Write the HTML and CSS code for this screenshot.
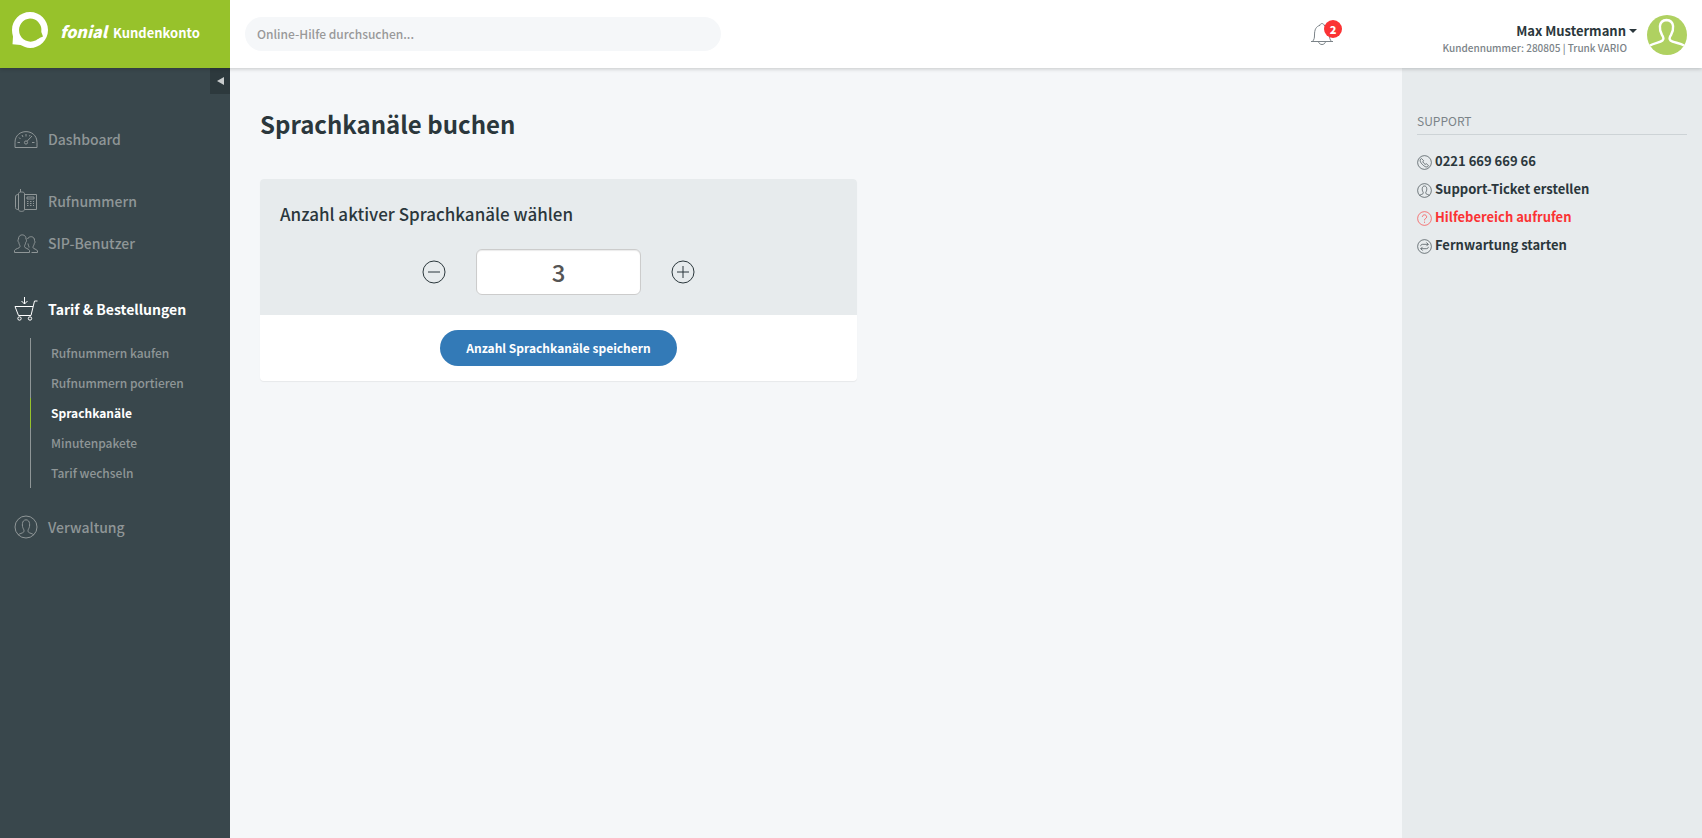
FILE: index.html
```html
<!DOCTYPE html>
<html lang="de">
<head>
<meta charset="utf-8">
<title>fonial Kundenkonto – Sprachkanäle buchen</title>
<link rel="stylesheet" href="styles.css">
</head>
<body>
<svg class="defs" aria-hidden="true">
  <symbol id="person" viewBox="0 0 24 24">
    <circle cx="12" cy="12" r="11"/>
    <path d="M4 20C5.500 18.500 8.500 18.200 9.500 17.200C10.200 16.200 10.200 15.200 9.300 13.700C8 11.500 7.400 5 12 4.800C16.600 5 16 11.500 14.700 13.700C13.800 15.200 13.800 16.200 14.500 17.200C15.500 18.200 18.500 18.500 20 20"/>
  </symbol>
</svg>
<div class="page">
  <header class="topbar">
    <a class="brand" href="#">
      <svg class="brand-mark" viewBox="0 0 36 36" aria-hidden="true">
        <path fill="#fff" fill-rule="evenodd" d="M18 0C28 0 36 8 36 18S28 36 18 36C14.500 36 11.500 34.500 8.500 33L.5 32.300L1 24.500C.4 22.500 0 20.300 0 18C0 8 8 0 18 0ZM18 6.500A11.600 11.600 0 1 0 23.500 28.600C25.500 27.500 26 26.500 31 24.500L29.300 20A11.600 11.600 0 0 0 18 6.500Z"/>
      </svg>
      <span class="brand-text"><em>fonial</em> Kundenkonto</span>
    </a>
    <form class="search" role="search">
      <input type="search" aria-label="Online-Hilfe durchsuchen" placeholder="Online-Hilfe durchsuchen...">
    </form>
    <button class="bell" type="button" aria-label="Benachrichtigungen">
      <svg class="icon" viewBox="0 0 24 24" aria-hidden="true"><path d="M1 19.500H23M2.500 19.500C4.200 17.500 4.500 16 4.500 13C4.500 7.500 6 4.500 10 3.300C10 1 14 1 14 3.300C18 4.500 19.500 7.500 19.500 13C19.500 16 19.800 17.500 21.500 19.500M8.500 19.500C9 23.500 15 23.500 15.500 19.500"/></svg>
      <span class="badge">2</span>
    </button>
    <div class="account">
      <button class="account-name" type="button">Max Mustermann<span class="caret"></span></button>
      <span class="account-info">Kundennummer: 280805 | Trunk VARIO</span>
    </div>
    <svg class="avatar" viewBox="0 0 40 40" aria-hidden="true">
      <circle cx="20" cy="20" r="20" fill="#afd161"/>
      <path fill="none" stroke="#fff" stroke-width="2.400" d="M3 30.500C7 28 13 27.500 15.500 25.500C17 24 16.800 22.500 15 20C12.500 16 10.500 5.500 19.500 5C28.500 5.500 26.500 16 24 20C22.200 22.500 22 24 23.500 25.500C26 27.500 33 28 37 30.500"/>
    </svg>
  </header>

  <nav class="sidebar" aria-label="Hauptnavigation">
    <button class="collapse" type="button" aria-label="Navigation einklappen"></button>
    <ul class="menu">
      <li><a href="#"><svg class="icon" viewBox="0 0 24 24" aria-hidden="true"><path d="M1 20.500V15.500C1 1 23 1 23 15.500V20.500Z"/><circle cx="12" cy="15.500" r="1.600"/><path d="M13 14.300L18 9M12 7V9.500M8 8L9 10M16 8L15.500 9.300M5 10.500L6.500 12M3.500 15.500H6M18 15.500H20.500"/></svg>Dashboard</a></li>
      <li class="spaced"><a href="#"><svg class="icon" viewBox="0 0 24 24" aria-hidden="true"><path d="M4.500 4.500C4.500 2.500 10.500 2.500 10.500 4.500V20.500C10.500 23 4.500 23 4.500 20.500ZM6.500 3V0M4.500 5.500C2.500 5.500 1.500 6 1.500 8V18.500C1.500 20 2.500 20.500 4.500 20.500M10.500 5.500H22.500V20.500H10.500"/><path d="M13 8H20V10H13Z"/><path stroke-dasharray="1.500 1.500" d="M13 12.500H20M13 14.500H20M13 16.500H20"/></svg>Rufnummern</a></li>
      <li><a href="#"><svg class="icon" viewBox="0 0 24 24" aria-hidden="true"><path d="M.5 21.500V19.500C1 17.500 6 17.500 6 15.500C6 14 5 13.500 4.800 11.500C3.500 10 4 9 4.500 8C4.300 2.500 12.200 2.500 12 8C12.500 9 13 10 11.700 11.500C11.500 13.500 10.500 14 10.500 15.500C10.500 17.500 15 17.500 15.500 19.500V21.500Z"/><path d="M13.500 8C15 4.500 20.800 5 20.500 9.500C21 10.500 21.300 11.500 20.300 12.500C20 14.500 19 15 19 16.500C19 18 23 18 23.500 20V21.500H17.500M14 12.500C14.200 14.500 15 15 15 16.500"/></svg>SIP-Benutzer</a></li>
      <li class="spaced-lg active"><a href="#"><svg class="icon" viewBox="0 0 24 24" aria-hidden="true"><path d="M23.500 4H20.500L17 18.500H4.500L1 9.500H19M10.500 0V7M7.500 4L10.500 7L13.500 4"/><circle cx="5.500" cy="21.500" r="1.700"/><circle cx="16" cy="21.500" r="1.700"/></svg>Tarif &amp; Bestellungen</a>
        <ul class="submenu">
          <li><a href="#">Rufnummern kaufen</a></li>
          <li><a href="#">Rufnummern portieren</a></li>
          <li class="current"><a href="#" aria-current="page">Sprachkanäle</a></li>
          <li><a href="#">Minutenpakete</a></li>
          <li><a href="#">Tarif wechseln</a></li>
        </ul>
      </li>
      <li><a href="#"><svg class="icon" aria-hidden="true"><use href="#person"/></svg>Verwaltung</a></li>
    </ul>
  </nav>

  <main class="content">
    <h1>Sprachkanäle buchen</h1>
    <form class="card">
      <div class="card-head">
        <h2><label for="channels">Anzahl aktiver Sprachkanäle wählen</label></h2>
        <div class="stepper">
          <button type="button" aria-label="Weniger"><svg class="icon" viewBox="0 0 24 24" aria-hidden="true"><circle cx="12" cy="12" r="11"/><path d="M6 12H18"/></svg></button>
          <input id="channels" type="text" inputmode="numeric" value="3">
          <button type="button" aria-label="Mehr"><svg class="icon" viewBox="0 0 24 24" aria-hidden="true"><circle cx="12" cy="12" r="11"/><path d="M6 12H18M12 6V18"/></svg></button>
        </div>
      </div>
      <div class="card-foot"><button class="save" type="submit">Anzahl Sprachkanäle speichern</button></div>
    </form>
  </main>

  <aside class="support">
    <h3>SUPPORT</h3>
    <ul>
      <li><a href="#"><svg class="icon" viewBox="0 0 24 24" aria-hidden="true"><circle cx="12" cy="12" r="11"/><path d="M7 5.500C3.500 8 5 11.500 9 15.500C13 19.500 16.500 20.500 18.500 17L15 14L13 15C11.500 14 10 12.500 9.300 11L10.500 9Z"/></svg>0221 669 669 66</a></li>
      <li><a href="#"><svg class="icon" aria-hidden="true"><use href="#person"/></svg>Support-Ticket erstellen</a></li>
      <li class="alert"><a href="#"><svg class="icon" viewBox="0 0 24 24" aria-hidden="true"><circle cx="12" cy="12" r="11"/><path d="M8.500 9.500C8.500 5 15.500 5 15.500 9.500C15.500 12 12 11.500 12 15M12 17V19"/></svg>Hilfebereich aufrufen</a></li>
      <li><a href="#"><svg class="icon" viewBox="0 0 24 24" aria-hidden="true"><circle cx="12" cy="12" r="11"/><path d="M6 11.500C6 9.500 7 8.500 9 8.500H18M15 5.500L18 8.500L15 11.500M18 12.500C18 14.500 17 15.500 15 15.500H6M9 12.500L6 15.500L9 18.500"/></svg>Fernwartung starten</a></li>
    </ul>
  </aside>
</div>
</body>
</html>
```
FILE: styles.css
```css
* { box-sizing: border-box; }

body {
  margin: 0;
  font-family: "Noto Sans CJK SC", "Noto Sans", sans-serif;
  font-size: 14px;
  line-height: 20px;
  color: #2b373c;
}

ul { margin: 0; padding: 0; list-style: none; }
a { color: inherit; text-decoration: none; }
h1, h2, h3 { margin: 0; }
button, input { font: inherit; color: inherit; }
button { padding: 0; border: 0; background: none; cursor: pointer; }

.defs { position: absolute; width: 0; height: 0; }

.icon {
  flex: none;
  width: 24px;
  height: 24px;
  fill: none;
  stroke: currentColor;
  stroke-width: 1;
}

.page {
  display: grid;
  grid-template-columns: 230px 1fr 300px;
  grid-template-rows: 68px 1fr;
  min-height: 100vh;
}

/* Top bar */
.topbar {
  grid-column: 1 / -1;
  z-index: 1;
  display: flex;
  align-items: center;
  padding-right: 15px;
  background: #fff;
  box-shadow: 0 1px 4px rgba(0, 0, 0, 0.2);
}

.brand {
  display: flex;
  gap: 12px;
  width: 230px;
  height: 68px;
  padding: 12px;
  background: #97c22b;
  color: #fff;
}
.brand-mark { width: 36px; height: 36px; }
.brand-text { font-size: 13px; font-weight: 700; line-height: 38px; }
.brand-text em { margin-right: 3px; font-size: 16px; font-weight: 900; }

.search { flex: 0 1 476px; margin-left: 15px; }
.search input {
  display: block;
  width: 100%;
  height: 34px;
  padding: 0 12px 2px;
  border: 0;
  border-radius: 17px;
  background: #f5f7f9;
  font-size: 12px;
  font-weight: 500;
}
.search input::placeholder { color: #999; opacity: 1; }

.bell {
  position: relative;
  height: 24px;
  margin-left: auto;
  color: #7b8388;
}
.badge {
  position: absolute;
  top: -2px;
  left: 14px;
  width: 18px;
  border-radius: 9px;
  background: #fb3334;
  color: #fff;
  font-size: 11px;
  font-weight: 900;
  line-height: 18px;
}

.account {
  display: flex;
  flex-direction: column;
  align-items: flex-end;
  width: 313px;
  padding: 10px 10px 0 0;
}
.account-name {
  display: flex;
  align-items: center;
  gap: 3px;
  font-size: 13px;
  font-weight: 700;
  line-height: 18px;
}
.account-info {
  padding-right: 10px;
  color: #7b8388;
  font-size: 10px;
  font-weight: 500;
  line-height: 16px;
}
.caret {
  border: 4px solid transparent;
  border-top-color: currentColor;
  border-bottom: 0;
}
.avatar { width: 40px; height: 40px; margin-top: 2px; }

/* Sidebar */
.sidebar {
  display: flex;
  flex-direction: column;
  background: #39474c;
  color: #8f9697;
}
.collapse {
  display: flex;
  align-items: center;
  justify-content: center;
  align-self: flex-end;
  width: 20px;
  height: 26px;
  background: #2d393d;
}
.collapse::before {
  content: "";
  border: 4px solid transparent;
  border-right: 7px solid #c9cccd;
  border-left: 0;
}
.menu { padding-top: 24px; }
.menu > li > a {
  display: flex;
  align-items: center;
  gap: 10px;
  height: 42px;
  padding-left: 14px;
  font-weight: 500;
}
.menu .spaced { margin-top: 20px; }
.menu .spaced-lg { margin-top: 24px; }
.menu > .active > a { color: #fff; font-weight: 700; }
.submenu { margin: 8px 0 18px 30px; }
.submenu a {
  display: block;
  padding-left: 20px;
  border-left: 1px solid #8f9697;
  font-size: 12px;
  font-weight: 500;
  line-height: 30px;
}
.submenu .current a {
  border-color: #97c22b;
  color: #fff;
  font-weight: 700;
}

/* Content */
.content { padding: 36px 30px; background: #f5f7f9; }
h1 { font-size: 24px; font-weight: 700; line-height: 40px; }
.card {
  max-width: 597px;
  margin-top: 35px;
  overflow: hidden;
  border-radius: 4px;
  background: #fff;
  box-shadow: 0 1px 1px rgba(0, 0, 0, 0.06);
}
.card-head { padding: 20px; background: #e7ebed; }
h2 { font-size: 17px; font-weight: 500; line-height: 30px; }
.stepper {
  display: flex;
  align-items: center;
  justify-content: center;
  gap: 30px;
  margin-top: 20px;
}
.stepper button { height: 24px; }
.stepper input {
  width: 165px;
  height: 46px;
  padding: 0 0 2px;
  border: 1px solid #ccc;
  border-radius: 6px;
  background: #fff;
  box-shadow: inset 0 1px 1px rgba(0, 0, 0, 0.08);
  color: #555;
  font-size: 24px;
  font-weight: 500;
  text-align: center;
}
.card-foot { display: flex; justify-content: center; padding: 15px; }
.save {
  height: 36px;
  padding: 0 26px;
  border-radius: 18px;
  background: #337ab7;
  color: #fff;
  font-size: 12px;
  font-weight: 700;
}

/* Support column */
.support { padding: 42px 15px; background: #e7ebed; }
h3 {
  padding-bottom: 2px;
  border-bottom: 1px solid #cdd3d6;
  color: #7b8388;
  font-size: 12px;
  font-weight: 400;
  line-height: 22px;
}
.support ul { margin-top: 12px; }
.support li a {
  display: flex;
  align-items: center;
  gap: 3px;
  font-size: 13px;
  font-weight: 700;
  line-height: 28px;
}
.support .icon { width: 15px; height: 15px; margin-top: 2px; }
.support .alert { color: #fb3334; }
```
